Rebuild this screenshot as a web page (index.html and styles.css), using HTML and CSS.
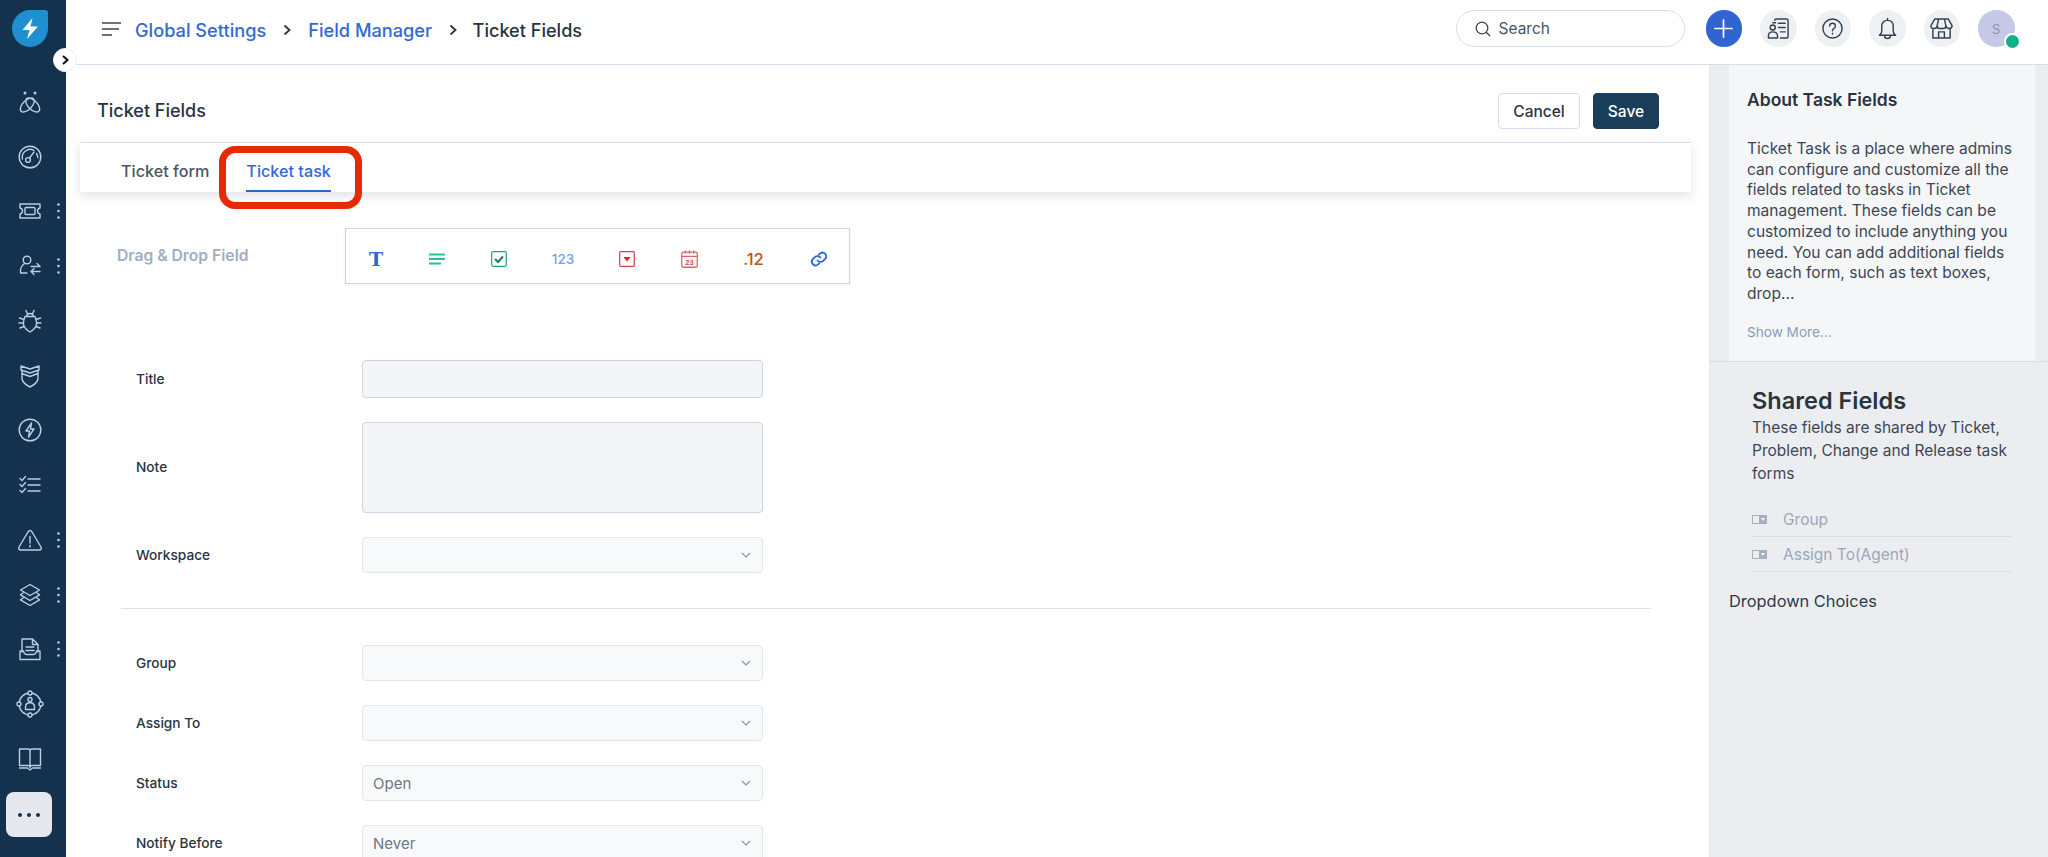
FILE: index.html
```html
<!DOCTYPE html>
<html lang="en">
<head>
<meta charset="utf-8">
<title>Ticket Fields</title>
<link rel="stylesheet" href="styles.css">
</head>
<body>
<div class="app">
  <nav class="sidebar">
    <div class="logo-wrap">
      <svg class="logo" viewBox="0 0 36 37"><path class="logo-drop" d="M18 0H33Q36 0 36 3V18.500A18 18.500 0 0 1 0 18.500A18 18.500 0 0 1 18 0Z"/><path class="logo-bolt" d="M20.500 8 10.500 20H17.500L15 29 26 16.500H18.500Z"/></svg>
    </div>
    <button class="toggle"><svg viewBox="0 0 12 12"><path d="M4 2 8.500 6 4 10"/></svg></button>
    <div class="nav-item"><svg class="nav-icon" viewBox="0 0 24 24"><circle class="solid" cx="7" cy="3" r="1.500"/><circle class="solid" cx="17" cy="3" r="1.500"/><ellipse cx="9.300" cy="15" rx="8.800" ry="4.500" transform="rotate(-45 9.300 15)"/><ellipse cx="14.700" cy="15" rx="8.800" ry="4.500" transform="rotate(45 14.700 15)"/></svg></div>
    <div class="nav-item"><svg class="nav-icon" viewBox="0 0 24 24"><circle cx="12" cy="12" r="10.800"/><path d="M4.500 14A7.800 7.800 0 0 1 16 5.500M18.500 8.500 A7.800 7.800 0 0 1 19.800 12.500"/><circle cx="10" cy="15" r="2.400"/><path d="M11.500 13 16 7"/></svg></div>
    <div class="nav-item"><svg class="nav-icon" viewBox="0 0 24 24"><path d="M2 5H22V9Q19.500 9.500 19.500 12T22 15V19H2V15Q4.500 14.500 4.500 12T2 9Z"/><rect x="7" y="8.500" width="10" height="7" rx="1"/></svg><svg class="kebab" viewBox="0 0 3 16"><circle cx="1.500" cy="1.500" r="1.300"/><circle cx="1.500" cy="8" r="1.300"/><circle cx="1.500" cy="14.500" r="1.300"/></svg></div>
    <div class="nav-item"><svg class="nav-icon" viewBox="0 0 24 24"><circle cx="9" cy="6" r="3.800"/><path d="M6.500 9.500C3.500 11.500 2 14 2.500 19H9M13 12.500H22M19 9.500 22 12.500M22 17.500H13M16 14.500 13 17.500 16 20.500"/></svg><svg class="kebab" viewBox="0 0 3 16"><circle cx="1.500" cy="1.500" r="1.300"/><circle cx="1.500" cy="8" r="1.300"/><circle cx="1.500" cy="14.500" r="1.300"/></svg></div>
    <div class="nav-item"><svg class="nav-icon" viewBox="0 0 24 24"><path d="M7 7.500H17Q19 12 18.500 16 17 20 12 23 7 20 5.500 16 5 12 7 7.500ZM8 1.500 9.500 5M16 1.500 14.500 5M8.500 7.500Q9 4.500 12 4.500T15.500 7.500M6 10.500 1.500 9M18 10.500 22.500 9M5.500 14H1M18.500 14H23M6 17.500 2 19M18 17.500 22 19"/></svg></div>
    <div class="nav-item"><svg class="nav-icon" viewBox="0 0 24 24"><path d="M3 2 12 5 21 2V6L12 9 3 6ZM4 7V15Q5 19.500 12 23 19 19.500 20 15V7M4 9.500 12 12.500 20 9.500"/></svg></div>
    <div class="nav-item"><svg class="nav-icon" viewBox="0 0 24 24"><circle cx="12" cy="12" r="10.800"/><path d="M13.500 5 8 13H11.500L10.500 19 16 11H12.500Z"/></svg></div>
    <div class="nav-item"><svg class="nav-icon" viewBox="0 0 24 24"><path d="M10 6H22M10 12H22M10 18H22M2 5.500 4 7.500 7.500 3.500M2 11.500 4 13.500 7.500 9.500M2 17.500 4 19.500 7.500 15.500"/></svg></div>
    <div class="nav-item"><svg class="nav-icon" viewBox="0 0 24 24"><path d="M12 2.500Q13 2.500 14 4L23 19Q24 22 21 22H3Q0 22 1 19L10 4Q11 2.500 12 2.500ZM12 8.500V15M12 17.500V19"/></svg><svg class="kebab" viewBox="0 0 3 16"><circle cx="1.500" cy="1.500" r="1.300"/><circle cx="1.500" cy="8" r="1.300"/><circle cx="1.500" cy="14.500" r="1.300"/></svg></div>
    <div class="nav-item"><svg class="nav-icon" viewBox="0 0 24 24"><path d="M12 1.500 21.500 7 12 12.500 2.500 7ZM5 10 2.500 11.800 12 17.500 21.500 11.800 19 10M5 15 2.500 16.800 12 22.500 21.500 16.800 19 15"/></svg><svg class="kebab" viewBox="0 0 3 16"><circle cx="1.500" cy="1.500" r="1.300"/><circle cx="1.500" cy="8" r="1.300"/><circle cx="1.500" cy="14.500" r="1.300"/></svg></div>
    <div class="nav-item"><svg class="nav-icon" viewBox="0 0 24 24"><path d="M4 15V2H14.500L20 7.500V15M14.500 2V7.500H20M8 10H16M8 13.500H16M2 14V22.500H22V14H18.500Q18 17.500 15.500 17.500H8.500Q6 17.500 5.500 14Z"/></svg><svg class="kebab" viewBox="0 0 3 16"><circle cx="1.500" cy="1.500" r="1.300"/><circle cx="1.500" cy="8" r="1.300"/><circle cx="1.500" cy="14.500" r="1.300"/></svg></div>
    <div class="nav-item"><svg class="nav-icon nav-icon-lg" viewBox="0 0 28 28"><circle cx="14" cy="14" r="11"/><circle class="fill-bg" cx="14" cy="3" r="2"/><circle class="fill-bg" cx="3" cy="14" r="2"/><circle class="fill-bg" cx="25" cy="14" r="2"/><circle class="fill-bg" cx="14" cy="25" r="2"/><circle cx="14" cy="9.500" r="2"/><path d="M9.500 19.500V17Q9.500 12.800 14 12.800T18.500 17V19.500Z"/></svg></div>
    <div class="nav-item"><svg class="nav-icon" viewBox="0 0 24 24"><path d="M1.500 2H10Q12 2 12 4V20.500Q12 18.500 10 18.500H1.500ZM22.500 2H14Q12 2 12 4M22.500 2V18.500H14Q12 18.500 12 20.500M1.500 21H9.500L12 23 14.500 21H22.500"/></svg></div>
    <div class="more-btn"><svg viewBox="0 0 22 4"><circle cx="2" cy="2" r="2"/><circle cx="11" cy="2" r="2"/><circle cx="20" cy="2" r="2"/></svg></div>
  </nav>

  <div class="content">
    <header class="topbar">
      <svg class="hamburger" viewBox="0 0 19 14"><path d="M0 1H19M0 7H17M0 13H10"/></svg>
      <a class="crumb">Global Settings</a>
      <svg class="crumb-sep" viewBox="0 0 8 12"><path d="M1.500 1.500 6.500 6 1.500 10.500"/></svg>
      <a class="crumb">Field Manager</a>
      <svg class="crumb-sep" viewBox="0 0 8 12"><path d="M1.500 1.500 6.500 6 1.500 10.500"/></svg>
      <span class="crumb crumb-current">Ticket Fields</span>
      <div class="topbar-right">
        <div class="search"><svg viewBox="0 0 16 16"><circle cx="7" cy="7" r="5.800"/><path d="M11.200 11.200 15 15"/></svg><span>Search</span></div>
        <div class="round round-add"><svg viewBox="0 0 20 20"><path d="M10 1V19M1 10H19"/></svg></div>
        <div class="round"><svg viewBox="0 0 24 24"><path d="M8 3.500Q8 2 10 2H20Q22 2 22 4V20Q22 22 20 22H14M12 6.500H19M12 11H19M14 15.500H19M6 6H9"/><circle cx="6" cy="11" r="2.600"/><path d="M1.500 22V19.500Q1.500 15.500 6 15.500T11 19.500V22Z"/></svg></div>
        <div class="round"><svg viewBox="0 0 24 24"><circle cx="12" cy="12" r="10"/><path d="M9 9.500Q9 6.500 12 6.500T15 9.300Q15 11 13.500 11.800T12 14.300M12 17V17.800"/></svg></div>
        <div class="round"><svg viewBox="0 0 24 24"><path d="M12 1.500V3.500M12 3.500Q6 3.500 6 10V15Q6 17 3.500 19H20.500Q18 17 18 15V10Q18 3.500 12 3.500ZM9 19.500Q9 22.500 12 22.500T15 19.500"/></svg></div>
        <div class="round"><svg viewBox="0 0 24 24"><path d="M5 2H19L23 9Q23 12 20 12T16.500 9Q16.500 12 14 12H10Q7.500 12 7.500 9 7.500 12 4 12T1 9ZM7.500 9 9 2M16.500 9 15 2M3 12V22H21V12M9 22V15.500H15V22"/></svg></div>
        <div class="avatar"><span>S</span><i class="presence"></i></div>
      </div>
    </header>

    <div class="workspace">
      <main class="main">
        <div class="title-row">
          <h1 class="page-title">Ticket Fields</h1>
          <div class="actions">
            <button class="btn btn-cancel">Cancel</button>
            <button class="btn btn-save">Save</button>
          </div>
        </div>
        <div class="tabs">
          <div class="tab">Ticket form</div>
          <div class="tab tab-active">Ticket task<span class="highlight"></span></div>
        </div>

        <div class="dnd-row">
          <div class="dnd-label">Drag &amp; Drop Field</div>
          <div class="toolbox">
            <div class="tool tool-t">T</div>
            <div class="tool"><svg class="tool-svg" viewBox="0 0 16 12"><path class="st-green" d="M0 1.500H16M0 6H16M0 10.500H12"/></svg></div>
            <div class="tool"><svg class="tool-svg" viewBox="0 0 16 16"><rect class="st-teal" x=".7" y=".7" width="14.600" height="14.600" rx="1.500"/><path class="st-teal-bold" d="M4 8 7 11 12 5.500"/></svg></div>
            <div class="tool tool-num">123</div>
            <div class="tool"><svg class="tool-svg" viewBox="0 0 16 16"><rect class="st-red" x=".7" y=".7" width="14.600" height="14.600" rx="1"/><path class="fl-red" d="M4.500 6H11.500L8 10.500Z"/></svg></div>
            <div class="tool"><svg class="tool-svg tool-cal" viewBox="0 0 16 17"><rect class="st-pink" x=".7" y="2" width="14.600" height="14.300" rx="1.500"/><path class="st-pink" d="M.7 6H15.300M4 .5V3.500M8 .5V3.500M12 .5V3.500"/><text class="cal-num" x="8" y="14.300">23</text></svg></div>
            <div class="tool tool-dec">.12</div>
            <div class="tool tool-last"><svg class="tool-svg tool-link" viewBox="0 0 24 24"><path d="M10 14a5 5 0 0 0 7.500.5l3-3a5 5 0 0 0-7-7l-1.700 1.700"/><path d="M14 10a5 5 0 0 0-7.500-.5l-3 3a5 5 0 0 0 7 7l1.700-1.700"/></svg></div>
          </div>
        </div>

        <form class="form">
          <div class="field"><label>Title</label><div class="input"></div></div>
          <div class="field field-note"><label>Note</label><div class="input input-area"></div></div>
          <div class="field"><label>Workspace</label><div class="select"><svg viewBox="0 0 10 6"><path d="M1 1 5 5 9 1"/></svg></div></div>
          <hr class="divider">
          <div class="field"><label>Group</label><div class="select"><svg viewBox="0 0 10 6"><path d="M1 1 5 5 9 1"/></svg></div></div>
          <div class="field"><label>Assign To</label><div class="select"><svg viewBox="0 0 10 6"><path d="M1 1 5 5 9 1"/></svg></div></div>
          <div class="field"><label>Status</label><div class="select"><span>Open</span><svg viewBox="0 0 10 6"><path d="M1 1 5 5 9 1"/></svg></div></div>
          <div class="field"><label>Notify Before</label><div class="select"><span>Never</span><svg viewBox="0 0 10 6"><path d="M1 1 5 5 9 1"/></svg></div></div>
        </form>
      </main>

      <aside class="aside">
        <section class="about">
          <h2>About Task Fields</h2>
          <p>Ticket Task is a place where admins can configure and customize all the fields related to tasks in Ticket management. These fields can be customized to include anything you need. You can add additional fields to each form, such as text boxes, drop...</p>
          <a class="show-more">Show More...</a>
        </section>
        <section class="shared">
          <h2>Shared Fields</h2>
          <p>These fields are shared by Ticket, Problem, Change and Release task forms</p>
          <div class="shared-row"><svg viewBox="0 0 15 9"><rect class="sr-box" x=".5" y=".5" width="14" height="8"/><rect class="sr-fill" x="7" y="0" width="8" height="9"/><path class="sr-tri" d="M9 3H13L11 6Z"/></svg><span>Group</span></div>
          <div class="shared-row"><svg viewBox="0 0 15 9"><rect class="sr-box" x=".5" y=".5" width="14" height="8"/><rect class="sr-fill" x="7" y="0" width="8" height="9"/><path class="sr-tri" d="M9 3H13L11 6Z"/></svg><span>Assign To(Agent)</span></div>
        </section>
        <div class="choices">Dropdown Choices</div>
      </aside>
    </div>
  </div>
</div>
</body>
</html>
```

FILE: styles.css
```css
* { box-sizing: border-box; }
html, body { margin: 0; height: 857px; overflow: hidden; }
body { font-family: Inter, "Noto Sans", sans-serif; color: #2a3441; background: #fff; }
.app { display: flex; height: 857px; position: relative; }

/* sidebar */
.sidebar { position: relative; width: 66px; flex: none; background: #14324d; display: flex; flex-direction: column; }
.logo-wrap { height: 74.500px; padding: 10px 0 0 12px; }
.logo { width: 36px; height: 37px; display: block; }
.logo-drop { fill: #1f8fd0; }
.logo-bolt { fill: #fff; }
.toggle { position: absolute; left: 53px; top: 48px; width: 24px; height: 24px; border: 1px solid #eef1f4; border-radius: 50%; background: #fff; padding: 0; display: flex; align-items: center; justify-content: center; z-index: 3; }
.toggle svg { width: 12px; height: 12px; fill: none; stroke: #111; stroke-width: 2; }
.nav-item { height: 54.750px; display: flex; align-items: center; padding-left: 17.500px; gap: 15px; flex: none; }
.nav-icon { width: 24px; height: 24px; flex: none; fill: none; stroke: #b4d0e8; stroke-width: 1.400; stroke-linejoin: round; stroke-linecap: round; }
.nav-icon-lg { width: 28px; height: 28px; margin: 0 -2px; }
.nav-icon .solid { fill: #b4d0e8; stroke: none; }
.nav-icon .fill-bg { fill: #14324d; }
.kebab { width: 3px; height: 16px; fill: #b4d0e8; flex: none; }
.more-btn { width: 46px; height: 45px; margin: 6px 0 0 6px; background: #e6e8ed; border-radius: 8px; display: flex; align-items: center; justify-content: center; flex: none; }
.more-btn svg { width: 22px; height: 4px; fill: #15334f; }

/* header */
.content { flex: 1; min-width: 0; display: flex; flex-direction: column; }
.topbar { height: 65px; flex: none; display: flex; align-items: center; padding: 0 33.500px 4px 36px; border-bottom: 1px solid #d6dfe9; }
.hamburger { width: 19px; height: 14px; margin: 0 14px 2px 0; fill: none; stroke: #3a4552; stroke-width: 1.500; }
.crumb { font-size: 18.200px; font-weight: 500; color: #3469d4; white-space: nowrap; }
.crumb-current { color: #2a3441; margin-left: -1.500px; font-size: 18.100px; }
.crumb-sep { width: 8px; height: 12px; margin: 0 17px; fill: none; stroke: #2a3441; stroke-width: 1.800; }
.topbar-right { margin-left: auto; align-self: flex-start; margin-top: 10px; display: flex; align-items: center; gap: 18px; }
.search { width: 229px; height: 37px; margin-right: 3px; border: 1px solid #d5dee8; border-radius: 19px; display: flex; align-items: center; gap: 8px; padding-left: 18px; font-size: 15.500px; color: #4b5563; }
.search svg { width: 16px; height: 16px; fill: none; stroke: #3a4552; stroke-width: 1.300; flex: none; }
.round { width: 36.500px; height: 36.500px; border-radius: 50%; background: #eef1f4; display: flex; align-items: center; justify-content: center; flex: none; }
.round svg { width: 23px; height: 23px; fill: none; stroke: #36414e; stroke-width: 1.500; stroke-linejoin: round; stroke-linecap: round; }
.round-add { background: #2f65d1; }
.round-add svg { stroke: #fff; stroke-width: 1.800; width: 19px; height: 19px; }
.avatar { position: relative; width: 36.500px; height: 36.500px; border-radius: 50%; background: #c5c9e8; display: flex; align-items: center; justify-content: center; font-size: 13px; color: #8e93a8; }
.presence { position: absolute; left: 26px; top: 23px; width: 17px; height: 17px; border-radius: 50%; background: #0fb08a; border: 2px solid #fff; }

/* layout */
.workspace { flex: 1; min-height: 0; display: flex; }
.main { width: 1643px; flex: none; padding: 0 18px 0 14px; overflow: hidden; }
.title-row { height: 77px; padding: 14px 32px 0 17px; display: flex; align-items: center; justify-content: space-between; }
.page-title { margin: 0; font-size: 18px; font-weight: 500; }
.actions { display: flex; gap: 13px; margin-top: 1px; }
.btn { height: 36px; border-radius: 4px; font-family: inherit; font-size: 15.500px; font-weight: 500; padding: 0; }
.btn-cancel { width: 82px; background: #fff; border: 1px solid #d5dee8; color: #2a3441; }
.btn-save { width: 66px; background: #1b3e5a; border: 1px solid #1b3e5a; color: #fff; }

/* tabs */
.tabs { height: 50px; border-top: 1px solid #d6dfe9; background: #fff; box-shadow: 0 4px 10px rgba(40, 60, 90, .14); display: flex; padding-left: 41px; gap: 37px; }
.tab { position: relative; height: 49px; padding-top: 17px; line-height: 22px; font-size: 16.200px; font-weight: 500; color: #4a5563; }
.tab-active { color: #3469d4; border-bottom: 2px solid #2f65d1; }
.highlight { position: absolute; left: -27px; top: 3px; width: 143px; height: 63px; border: 7px solid #e52a05; border-radius: 16px; }

/* drag and drop row */
.dnd-row { display: flex; align-items: center; margin-top: 36px; padding-left: 37px; }
.dnd-label { width: 228px; margin-bottom: 1.500px; font-size: 15.700px; font-weight: 600; color: #a0aec0; white-space: nowrap; }
.toolbox { width: 505px; height: 56px; border: 1px solid #c9d6e2; box-shadow: 0 1px 3px rgba(40, 60, 90, .08); display: grid; grid-template-columns: 60px 62px 61px 68px 60px 64px 65px 63px; align-items: center; justify-items: center; }
.tool { display: flex; align-items: center; justify-content: center; margin-top: 5px; }
.tool-last { margin-left: 3px; }
.tool-svg { width: 16px; height: 16px; fill: none; overflow: visible; }
.tool-cal { width: 17px; height: 18px; }
.tool-t { font-family: "DejaVu Serif", serif; font-weight: 700; font-size: 19px; color: #2f65d1; line-height: 16px; }
.tool-num { font-family: Inter, sans-serif; font-weight: 500; font-size: 13.500px; color: #66a3f2; }
.tool-dec { font-family: Inter, sans-serif; font-weight: 500; font-size: 16.500px; color: #b5561b; }
.st-green { stroke: #2bbf9b; stroke-width: 2; }
.st-teal { stroke: #1fa07f; stroke-width: 1.200; }
.st-teal-bold { stroke: #12805f; stroke-width: 2; }
.st-red { stroke: #dc3f48; stroke-width: 1.200; }
.fl-red { fill: #cf2833; }
.st-pink { stroke: #e0616a; stroke-width: 1.200; }
.cal-num { font-family: "Liberation Sans", sans-serif; font-size: 7px; font-weight: 700; fill: #d8434c; text-anchor: middle; }
.tool-link { width: 18px; height: 18px; stroke: #2f65d1; stroke-width: 2.400; stroke-linecap: round; }

/* form */
.form { margin-top: 76px; padding-left: 56px; }
.field { display: grid; grid-template-columns: 226px 401px; align-items: center; margin-bottom: 24px; }
.field label { font-size: 13.700px; font-weight: 500; color: #2a3441; }
.field-note label { margin-bottom: 2px; }
.input { height: 38px; background: #f4f5f7; border: 1px solid #ccd6e2; border-radius: 4px; }
.input-area { height: 91px; }
.select { height: 36px; background: #f8f9fb; border: 1px solid #e2e6ec; border-radius: 4px; display: flex; align-items: center; padding: 0 11px 0 10px; font-size: 15px; color: #6f7780; }
.select svg { width: 10px; height: 6px; margin-left: auto; fill: none; stroke: #8b939d; stroke-width: 1.100; }
.divider { margin: 35px 40px 36px -15px; width: 1530px; border: 0; border-top: 1px solid #dde2e8; }

/* aside */
.aside { flex: 1; min-width: 0; background: #ebedf1; }
.about { margin: 0 13px 0 20px; height: 296px; padding: 15px 18px 0; background: #f5f6f8; }
.about h2 { margin: 0; font-size: 17.500px; font-weight: 600; line-height: 40px; }
.about p { margin: 19px 0 0; font-size: 15.550px; line-height: 20.700px; color: #3d4754; }
.show-more { display: block; margin-top: 19px; font-size: 13.600px; color: #8a9db5; }
.shared { border-top: 1px solid #d9dde3; padding: 24px 36px 0 43px; }
.shared h2 { margin: 0; font-size: 23.500px; font-weight: 600; line-height: 30px; }
.shared p { margin: 0 0 17px; font-size: 15.500px; line-height: 23px; color: #3d4754; }
.shared-row { height: 35px; display: flex; align-items: center; gap: 16px; border-bottom: 1px solid #d9dde3; font-size: 15.500px; color: #9aa8ba; }
.shared-row svg { width: 15px; height: 9px; flex: none; }
.sr-box { fill: none; stroke: #a6b0bd; }
.sr-fill { fill: #a6b0bd; }
.sr-tri { fill: #fff; }
.choices { margin: 19px 0 0 20px; font-size: 16.400px; color: #2f3a47; }
```
